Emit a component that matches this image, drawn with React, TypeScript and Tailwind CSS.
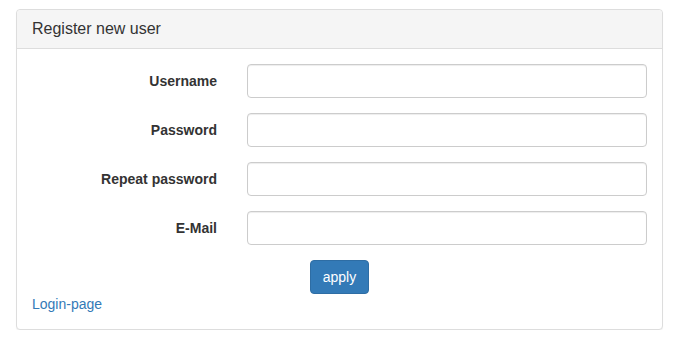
import React from 'react'

const fields = [
  { label: 'Username', type: 'text' },
  { label: 'Password', type: 'password' },
  { label: 'Repeat password', type: 'password' },
  { label: 'E-Mail', type: 'email' },
]

export default function App() {
  return (
    <div className="pt-[9px] pl-[16px] pr-[15px] text-[14px] leading-[20px] text-[#333]" style={{ fontFamily: '"Liberation Sans", Arial, sans-serif' }}>
      <div className="rounded border border-[#ddd] bg-white shadow-[0_1px_1px_rgba(0,0,0,0.05)]">
        <div className="rounded-t border-b border-[#ddd] bg-[#f5f5f5] px-[15px] py-[10px]">
          <h3 className="text-[16px] leading-[17.6px]">Register new user</h3>
        </div>
        <div className="p-[15px]">
          <form className="flex flex-col" onSubmit={(e) => e.preventDefault()}>
            {fields.map((f) => (
              <div key={f.label} className="-mx-[15px] mb-[15px] flex">
                <label className="w-1/3 px-[15px] pt-[7px] text-right font-bold">{f.label}</label>
                <div className="w-2/3 px-[15px]">
                  <input
                    type={f.type}
                    className="block h-[34px] w-full rounded border border-[#ccc] px-3 shadow-[inset_0_1px_1px_rgba(0,0,0,0.075)] outline-none"
                  />
                </div>
              </div>
            ))}
            <div className="text-center">
              <button
                type="submit"
                className="rounded border border-[#2e6da4] bg-[#337ab7] px-3 py-[6px] text-[14px] leading-[20px] text-white"
              >
                apply
              </button>
            </div>
          </form>
          <a href="#" className="text-[#337ab7]">Login-page</a>
        </div>
      </div>
    </div>
  )
}
